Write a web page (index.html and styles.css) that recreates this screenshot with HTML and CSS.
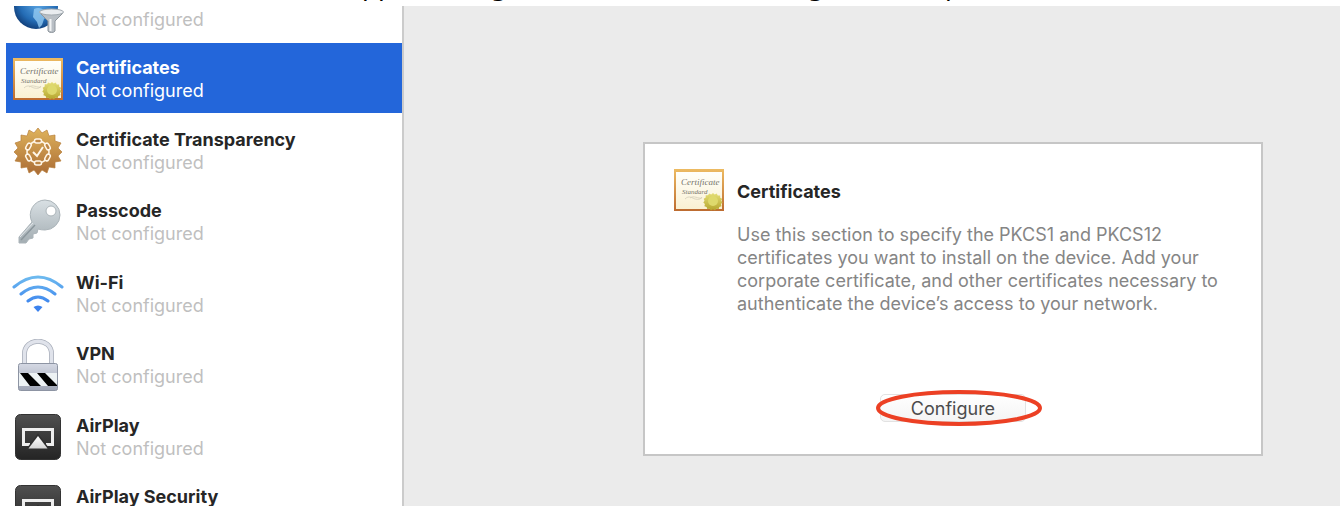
FILE: index.html
```html
<!DOCTYPE html>
<html lang="en">
<head>
    <meta charset="UTF-8" />
    <meta name="viewport" content="width=device-width, initial-scale=1.0" />
    <title>Certificates</title>
    <link rel="stylesheet" href="styles.css">
</head>
<body>
<!-- Shared gradients and symbols -->
<svg class="defs" aria-hidden="true">
    <defs>
        <linearGradient id="frame" x1="0" y1="0" x2="0" y2="1">
            <stop offset="0" stop-color="#edbb62" />
            <stop offset="1" stop-color="#bd6b30" />
        </linearGradient>
        <linearGradient id="paper" x1="0" y1="0" x2="0" y2="1">
            <stop offset="0" stop-color="#fffffb" />
            <stop offset="1" stop-color="#faf1d3" />
        </linearGradient>
        <linearGradient id="seal" x1="0" y1="0" x2="0" y2="1">
            <stop offset="0" stop-color="#e5df79" />
            <stop offset="1" stop-color="#b5a52c" />
        </linearGradient>
        <linearGradient id="bronze" x1="0" y1="0" x2="0" y2="1">
            <stop offset="0" stop-color="#dfb35b" />
            <stop offset="1" stop-color="#aa6b35" />
        </linearGradient>
        <linearGradient id="silver" x1="0" y1="0" x2="0" y2="1">
            <stop offset="0" stop-color="#d9e0e4" />
            <stop offset="1" stop-color="#a3adb2" />
        </linearGradient>
        <linearGradient id="wave" gradientUnits="userSpaceOnUse" x1="0" y1="7" x2="0" y2="44">
            <stop offset="0" stop-color="#70bdef" />
            <stop offset="1" stop-color="#2f76ee" />
        </linearGradient>
        <linearGradient id="steel" x1="0" y1="0" x2="0" y2="1">
            <stop offset="0" stop-color="#d5d9e4" />
            <stop offset="1" stop-color="#9fa5b5" />
        </linearGradient>
        <linearGradient id="dark" x1="0" y1="0" x2="0" y2="1">
            <stop offset="0" stop-color="#505050" />
            <stop offset="1" stop-color="#242424" />
        </linearGradient>
        <linearGradient id="white" x1="0" y1="0" x2="0" y2="1">
            <stop offset="0" stop-color="#ffffff" />
            <stop offset="1" stop-color="#d6d6d6" />
        </linearGradient>
        <radialGradient id="ocean" cx="0.55" cy="0.4" r="0.6">
            <stop offset="0" stop-color="#5fa9e6" />
            <stop offset="0.7" stop-color="#246cb5" />
            <stop offset="1" stop-color="#12427e" />
        </radialGradient>
    </defs>
    <symbol id="certificate" viewBox="0 0 52 52">
        <rect x="1" y="5" width="50" height="42" fill="url(#frame)" />
        <rect x="3" y="8" width="46" height="37" fill="url(#paper)" />
        <text class="script-title" x="8" y="21">Certificate</text>
        <text class="script-line" x="9" y="30">Standard</text>
        <path d="M12 35c4-4 7-1 10 0 4 1 6 0 7-2m-12 1c4-3 8 1 12 0" fill="none" stroke="#cfc9b4" stroke-width="0.7" />
        <path d="m40 29 1.700 1.500 2-1 1.100 1.900h2.300l.1 2.300 2 1.100-.9 2 1.300 1.800-1.600 1.500.5 2.200-2.200.7-.6 2.100-2.300-.3-1.500 1.700-1.900-1.200-2 1.200-1.500-1.700-2.200.3-.7-2.200-2.200-.6.500-2.200-1.600-1.500 1.200-1.900-.8-2 2-1.100v-2.300h2.300l1.200-1.900 2 1z" fill="url(#seal)" />
        <circle cx="40" cy="37" r="5" fill="#ded96c" />
    </symbol>
    <symbol id="airplay" viewBox="0 0 52 52">
        <rect x="3.500" y="3.500" width="45" height="45" rx="5" fill="url(#dark)" stroke="#333" />
        <path d="M18 33.500H11.500v-15h29v15H34" fill="none" stroke="#eee" stroke-width="3" />
        <path d="M26 25 35.500 37.500h-19z" fill="url(#white)" stroke="#303030" stroke-width="3" paint-order="stroke" />
    </symbol>
</svg>

<div class="page">
    <p class="caption"><span>pp</span><span>g</span><span>g</span><span>p</span></p>
    <div class="window">
        <!-- Payload list -->
        <nav class="sidebar">
            <a class="item" href="#filter">
                <svg class="icon" viewBox="0 0 52 52">
                    <circle cx="24" cy="25" r="22" fill="url(#ocean)" />
                    <path d="M22 27c4-2 8-1 11 2l4 3-5 5-2 6-3 3-2-6-4-5zM9 14l8-5 5 3-4 7-7 3z" fill="#92c9f1" opacity="0.800" />
                    <path d="M28 31c0-4 23-4 23 0l-8 8v10c-1 2-6 2-7 0V39z" fill="#b9bfc5" stroke="#8d959c" />
                    <ellipse cx="39.500" cy="30" rx="12" ry="3" fill="#e9ecef" stroke="#a3abb1" />
                    <path d="M38.500 37v12" stroke="#f1f3f4" stroke-width="2" />
                </svg>
                <span class="label"><strong>Web Content Filter</strong><span>Not configured</span></span>
            </a>
            <a class="item active" href="#certificates">
                <svg class="icon"><use href="#certificate" /></svg>
                <span class="label"><strong>Certificates</strong><span>Not configured</span></span>
            </a>
            <a class="item" href="#transparency">
                <svg class="icon" viewBox="0 0 52 52">
                    <path d="m26 3 4 5 5-3 2 6 6-1v6l6 2-3 5 4 4-4 4 3 5-6 1v6l-6-1-2 6-5-3-4 5-4-5-5 3-2-6-6 1v-6l-6-1 3-5-4-4 4-4-3-5 6-2v-6l6 1 2-6 5 3z" fill="url(#bronze)" stroke="#b7803e" stroke-width="0.700" />
                    <g fill="none" stroke="#fff6e8">
                        <circle cx="26" cy="27" r="11" stroke-width="1.500" />
                        <g fill="#bd8646" stroke-width="1.500">
                            <rect x="22.500" y="14" width="7" height="4" rx="2" />
                            <rect x="22.500" y="36" width="7" height="4" rx="2" />
                            <rect x="22.500" y="14" width="7" height="4" rx="2" transform="rotate(60 26 27)" />
                            <rect x="22.500" y="14" width="7" height="4" rx="2" transform="rotate(120 26 27)" />
                            <rect x="22.500" y="14" width="7" height="4" rx="2" transform="rotate(240 26 27)" />
                            <rect x="22.500" y="14" width="7" height="4" rx="2" transform="rotate(300 26 27)" />
                        </g>
                        <path d="m21 27 4 4 6-9" stroke-width="2" />
                    </g>
                </svg>
                <span class="label"><strong>Certificate Transparency</strong><span>Not configured</span></span>
            </a>
            <a class="item" href="#passcode">
                <svg class="icon" viewBox="0 0 52 52">
                    <path fill-rule="evenodd" d="M33 4a15 15 0 0 1 0 30q-4 0-7-1l-1 4-4 1v4l-4 1-3 4H7v-6l13-15A15 15 0 0 1 33 4zm6 6a5 5 0 1 0 0 10 5 5 0 0 0 0-10z" fill="url(#silver)" stroke="#abb4b9" />
                    <path d="m9 44 14-15" stroke="#8b969c" stroke-width="1.500" />
                    <path d="m8 41 13-14" stroke="#e1e6e9" />
                </svg>
                <span class="label"><strong>Passcode</strong><span>Not configured</span></span>
            </a>
            <a class="item" href="#wifi">
                <svg class="icon" viewBox="0 0 52 52">
                    <g fill="none" stroke="url(#wave)" stroke-width="3" stroke-linecap="round">
                        <path d="M2 19q24-20 48 0M9 26q17-14 34 0M16 33q10-8 20 0" />
                    </g>
                    <path d="M21.500 39q4.500-3 9 0L26 44z" fill="#3b82ee" />
                </svg>
                <span class="label"><strong>Wi-Fi</strong><span>Not configured</span></span>
            </a>
            <a class="item" href="#vpn">
                <svg class="icon" viewBox="0 0 52 52">
                    <path d="M12.500 25V15c0-17 27-17 27 0v10" fill="none" stroke="#a7adb9" stroke-width="5" />
                    <path d="M12.500 25V15c0-17 27-17 27 0v10" fill="none" stroke="#e0e3eb" stroke-width="3.500" />
                    <rect x="6.500" y="24.500" width="39" height="27" rx="2" fill="url(#steel)" stroke="#8d94a3" />
                    <rect x="7" y="34" width="38" height="13" fill="#edf2f4" />
                    <path d="M8 34h8l13 13H18zM25 34h8l12 12v1H36z" fill="#000" />
                </svg>
                <span class="label"><strong>VPN</strong><span>Not configured</span></span>
            </a>
            <a class="item" href="#airplay-settings">
                <svg class="icon"><use href="#airplay" /></svg>
                <span class="label"><strong>AirPlay</strong><span>Not configured</span></span>
            </a>
            <a class="item" href="#airplay-security">
                <svg class="icon"><use href="#airplay" /></svg>
                <span class="label"><strong>AirPlay Security</strong><span>Not configured</span></span>
            </a>
        </nav>

        <!-- Selected payload -->
        <main class="content">
            <section class="panel">
                <svg class="icon"><use href="#certificate" /></svg>
                <div class="details">
                    <h1>Certificates</h1>
                    <p>Use this section to specify the PKCS1 and PKCS12 certificates you want to install on the device. Add your corporate certificate, and other certificates necessary to authenticate the device’s access to your network.</p>
                </div>
                <div class="action">
                    <button type="button">Configure</button>
                    <svg class="highlight" viewBox="0 0 168 38">
                        <ellipse cx="84" cy="19" rx="81" ry="16" fill="none" stroke="#ec4024" stroke-width="4" />
                    </svg>
                </div>
            </section>
        </main>
    </div>
</div>
</body>
</html>
```

FILE: styles.css
```css
* {
    box-sizing: border-box;
}
body {
    margin: 0;
    font-family: Inter, 'Liberation Sans', sans-serif;
    font-size: 18px;
    line-height: 23px;
    background: #fff;
}
.defs {
    position: absolute;
    width: 0;
    height: 0;
}
.page {
    display: flex;
    flex-direction: column;
    height: 100vh;
    padding: 0 4px 4px 6px;
    overflow: hidden;
}
/* Last line of the paragraph above, cut by the top edge */
.caption {
    display: grid;
    grid-template-columns: 129px 317px 137px auto;
    flex: none;
    height: 34px;
    margin: -28px 0 0;
    padding-left: 356px;
    color: #000;
    font-family: 'Noto Sans', sans-serif;
    font-size: 26px;
    line-height: 26px;
}
.window {
    display: flex;
    flex: 1;
    min-height: 0;
    overflow: hidden;
}
/* Sidebar, scrolled part of the way down its first row */
.sidebar {
    flex: 0 0 398px;
    margin-top: -35px;
    border-right: 2px solid #cbcbcb;
}
.item {
    display: flex;
    align-items: center;
    gap: 12px;
    height: 71px;
    padding: 2px 6px 0;
    border-bottom: 1px solid #fff;
    color: #bfbfbf;
    text-decoration: none;
}
.item:nth-child(odd) {
    height: 72px;
}
.item strong {
    color: #262626;
    font-weight: 700;
}
.item.active {
    background: #2366da;
}
.item.active,
.item.active strong {
    color: #fff;
}
.label {
    display: flex;
    flex-direction: column;
}
.icon {
    flex: none;
    width: 52px;
    height: 52px;
}
/* Lettering inside the certificate icon */
.script-title,
.script-line {
    fill: #77756c;
    font-family: 'Liberation Serif', serif;
    font-style: italic;
}
.script-title {
    font-size: 9px;
}
.script-line {
    font-size: 7px;
}
/* Payload description */
.content {
    flex: 1;
    padding: 136px 77px 0 239px;
    background: #ebebeb;
}
.panel {
    display: grid;
    grid-template-columns: 52px 1fr;
    column-gap: 12px;
    padding: 20px 28px 32px;
    border: 2px solid #c6c6c6;
    background: #fff;
}
.details h1 {
    margin: 16px 0 20px;
    color: #262626;
    font-size: 18px;
    font-weight: 700;
}
.details p {
    margin: 0;
    color: #858585;
}
.action {
    position: relative;
    grid-column: 1 / -1;
    justify-self: center;
    margin-top: 79px;
}
.action button {
    width: 146px;
    height: 28px;
    border: 1px solid #e2e2e2;
    border-radius: 5px;
    background: linear-gradient(#fff, #f4f4f4);
    color: #4c4c4c;
    font: inherit;
}
/* Red ring drawn around the button */
.highlight {
    position: absolute;
    top: -5px;
    left: -5px;
    width: 168px;
    height: 38px;
    pointer-events: none;
}
```
